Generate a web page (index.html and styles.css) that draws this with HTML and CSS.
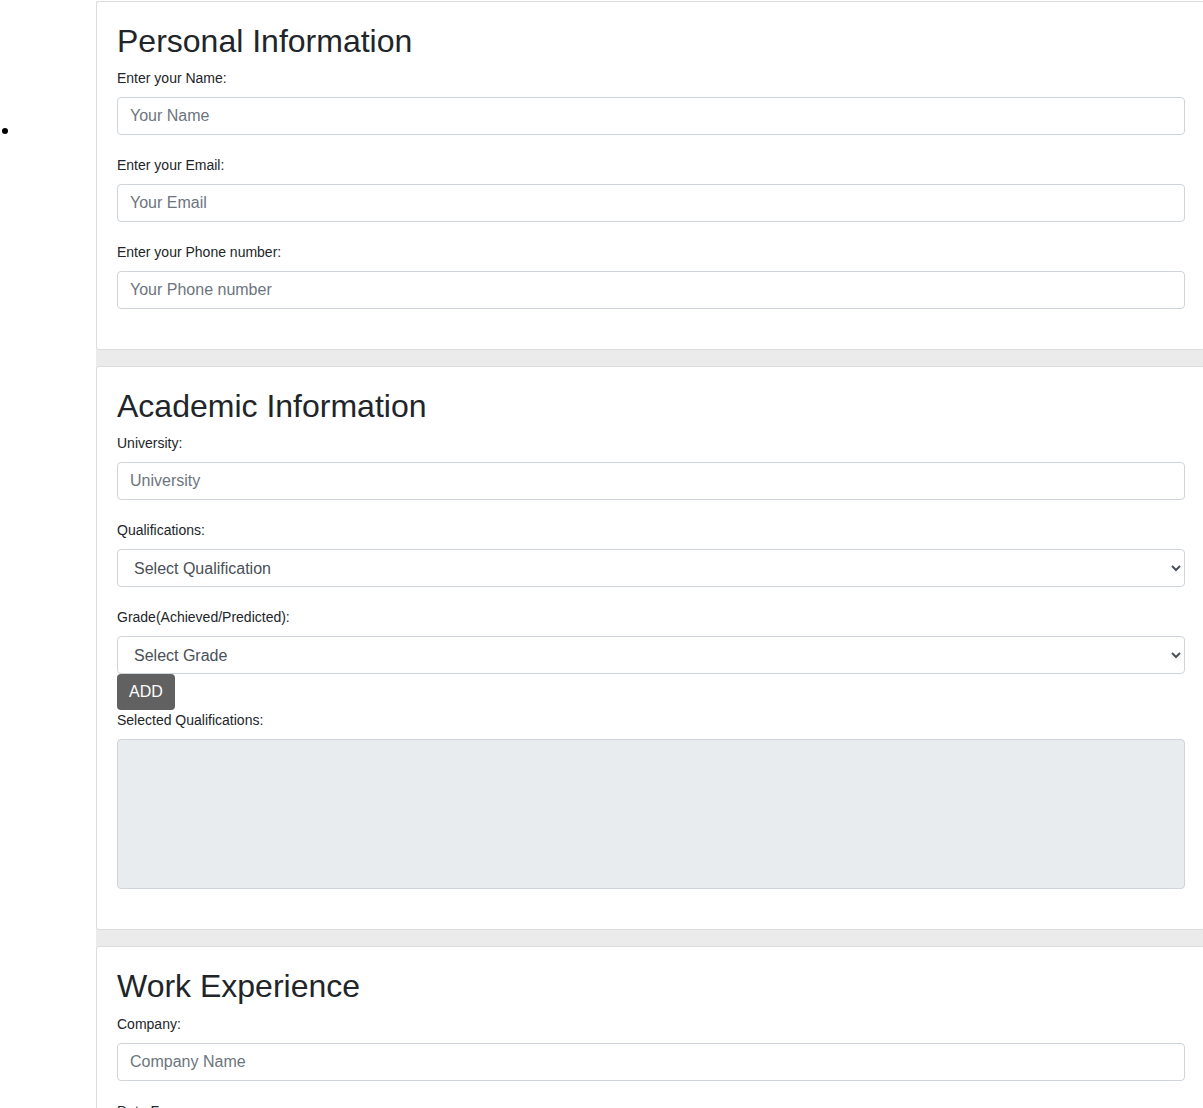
FILE: index.html
```html
<!DOCTYPE html>
<html lang="en">
<head>
<meta charset="utf-8">
<title>Application Form</title>
<link rel="stylesheet" href="styles.css">
</head>
<body>
<div class="page">
  <aside class="sidebar">
    <ul class="nav-list">
      <li class="nav-item"></li>
    </ul>
  </aside>
  <main class="main">
    <section class="card">
      <h2 class="card-title">Personal Information</h2>
      <div class="form-group">
        <label class="form-label" for="name">Enter your Name:</label>
        <input class="form-control" id="name" type="text" placeholder="Your Name">
      </div>
      <div class="form-group">
        <label class="form-label" for="email">Enter your Email:</label>
        <input class="form-control" id="email" type="email" placeholder="Your Email">
      </div>
      <div class="form-group">
        <label class="form-label" for="phone">Enter your Phone number:</label>
        <input class="form-control" id="phone" type="text" placeholder="Your Phone number">
      </div>
    </section>

    <section class="card">
      <h2 class="card-title">Academic Information</h2>
      <div class="form-group">
        <label class="form-label" for="uni">University:</label>
        <input class="form-control" id="uni" type="text" placeholder="University">
      </div>
      <div class="form-group">
        <label class="form-label" for="qual">Qualifications:</label>
        <select class="form-control form-select" id="qual">
          <option>Select Qualification</option>
        </select>
      </div>
      <div class="form-group-tight">
        <label class="form-label" for="grade">Grade(Achieved/Predicted):</label>
        <select class="form-control form-select" id="grade">
          <option>Select Grade</option>
        </select>
      </div>
      <button class="btn-add" type="button">ADD</button>
      <div class="form-group">
        <label class="form-label" for="selected">Selected Qualifications:</label>
        <textarea class="form-control form-textarea" id="selected" disabled></textarea>
      </div>
    </section>

    <section class="card">
      <h2 class="card-title">Work Experience</h2>
      <div class="form-group">
        <label class="form-label" for="company">Company:</label>
        <input class="form-control" id="company" type="text" placeholder="Company Name">
      </div>
      <div class="form-group">
        <label class="form-label" for="from">Date From:</label>
        <input class="form-control" id="from" type="text" placeholder="Date From">
      </div>
    </section>
  </main>
</div>
</body>
</html>
```

FILE: styles.css
```css
html, body {
  margin: 0;
  padding: 0;
  overflow: hidden;
  background: #ffffff;
}

body {
  font-family: "Liberation Sans", Arial, sans-serif;
  font-size: 16px;
  line-height: 1.5;
  color: #212529;
}

.page {
  display: flex;
  align-items: flex-start;
  width: 1205px;
}

.sidebar {
  width: 96px;
  flex: 0 0 96px;
  padding-top: 128px;
}

.nav-list {
  margin: 0;
  padding: 0 0 0 2px;
  list-style: none;
}

.nav-item {
  display: block;
  height: 6px;
}

.nav-item::before {
  content: "";
  display: block;
  width: 6px;
  height: 6px;
  border-radius: 50%;
  background: #000;
}

.main {
  flex: 0 0 1109px;
  width: 1109px;
  margin-top: 0.6px;
  background: #ebebeb;
  display: flex;
  flex-direction: column;
  gap: 16px;
}

.card {
  background: #fff;
  border: 1px solid #dcdcdc;
  border-radius: 3px;
  padding: 20px 19px 20px 20px;
}

.card-title {
  margin: 0 0 8px;
  font-size: 32px;
  font-weight: 500;
  line-height: 1.2;
  color: #212529;
}

.form-group {
  margin-bottom: 20px;
}

.form-group-tight {
  margin-bottom: 0;
}

.form-label {
  display: block;
  margin-bottom: 8px;
  font-size: 14px;
  line-height: 21px;
  color: #212529;
}

.form-control {
  display: block;
  box-sizing: border-box;
  width: 1068px;
  height: 38px;
  padding: 6px 12px;
  font-family: "Liberation Sans", Arial, sans-serif;
  font-size: 16px;
  line-height: 1.5;
  color: #495057;
  background: #fff;
  border: 1px solid #ced4da;
  border-radius: 4px;
  margin: 0;
}

.form-control::placeholder {
  color: #6c757d;
  opacity: 1;
}

.form-select {
  color: #495057;
}

.form-textarea {
  height: 150px;
  resize: none;
  background: #e9ecef;
}

.btn-add {
  display: block;
  box-sizing: border-box;
  height: 36px;
  padding: 6px 12px;
  margin: 0;
  font-family: "Liberation Sans", Arial, sans-serif;
  font-size: 16px;
  line-height: 24px;
  color: #fff;
  background: #616161;
  border: none;
  border-radius: 4px;
}
```
